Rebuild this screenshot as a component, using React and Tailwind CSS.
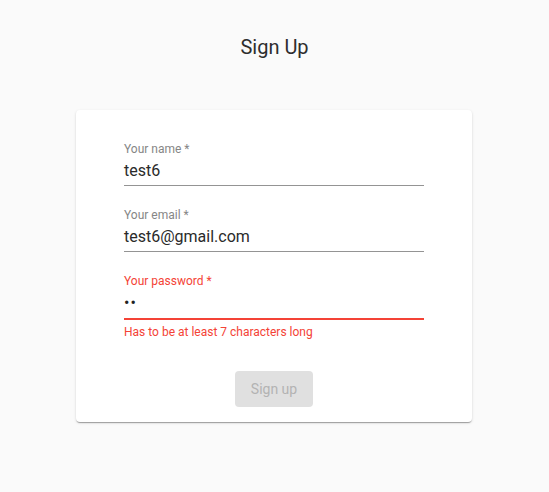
export default function App() {
  const font = { fontFamily: "Roboto, 'Helvetica Neue', Arial, sans-serif" };
  return (
    <div className="min-h-screen bg-[#fafafa] flex flex-col items-center pt-[35px]" style={font}>
      <h1 className="text-[20px] leading-[24px] font-normal text-[#2e2e2e]">Sign Up</h1>
      <div className="mt-[51px] mr-[1px] w-[396px] bg-white rounded-[4px] px-[48px] pt-[32px] pb-[15px] shadow-[0px_2px_1px_-1px_rgba(0,0,0,0.2),0px_1px_1px_0px_rgba(0,0,0,0.14),0px_1px_3px_0px_rgba(0,0,0,0.12)]">
        <div className="flex flex-col">
          <div>
            <div className="text-[12px] leading-[14px] text-[#868686]">Your name *</div>
            <div className="pt-[5px] pb-[5px] border-b border-[#949494] text-[16px] leading-[19px] text-[#2a2a2a]">test6</div>
          </div>
          <div className="mt-[22px]">
            <div className="text-[12px] leading-[14px] text-[#868686]">Your email *</div>
            <div className="pt-[5px] pb-[5px] border-b border-[#949494] text-[16px] leading-[19px] text-[#2a2a2a]">test6@gmail.com</div>
          </div>
          <div className="mt-[22px]">
            <div className="text-[12px] leading-[14px] text-[#f44336]">Your password *</div>
            <div className="pt-[5px] pb-[6px] border-b-2 border-[#f44336] text-[16px] leading-[19px] text-[#212121] tracking-[1px]">••</div>
            <div className="mt-[5px] text-[12px] leading-[14px] text-[#f44336]">Has to be at least 7 characters long</div>
          </div>
        </div>
        <div className="mt-[32px] flex justify-center">
          <button className="h-[36px] px-[16px] rounded-[4px] bg-[#e0e0e0] text-[#b3b3b3] text-[14px] leading-[36px]" disabled>
            Sign up
          </button>
        </div>
      </div>
    </div>
  );
}
